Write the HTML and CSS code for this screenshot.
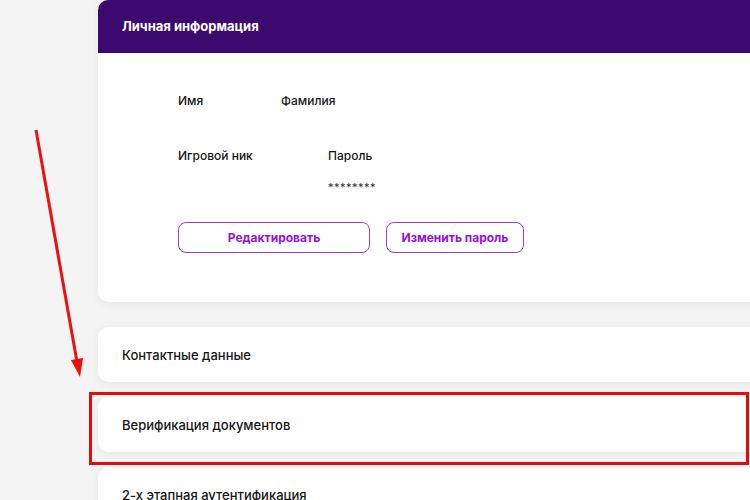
FILE: index.html
```html
<!DOCTYPE html>
<html lang="ru">
<head>
    <meta charset="UTF-8">
    <meta name="viewport" content="width=device-width, initial-scale=1.0">
    <title>Профиль</title>
    <link rel="stylesheet" href="styles.css">
</head>
<body>
    <div id="content">
        <div class="card info">
            <div class="info-head">Личная информация</div>
            <div class="info-body">
                <div class="fields">
                    <div class="field short">
                        <div class="label">Имя</div>
                        <div class="value"></div>
                    </div>
                    <div class="field">
                        <div class="label">Фамилия</div>
                        <div class="value"></div>
                    </div>
                </div>
                <div class="fields second">
                    <div class="field wide">
                        <div class="label">Игровой ник</div>
                        <div class="value"></div>
                    </div>
                    <div class="field">
                        <div class="label">Пароль</div>
                        <div class="value">********</div>
                    </div>
                </div>
                <div class="buttons">
                    <button class="btn edit">Редактировать</button>
                    <button class="btn pass">Изменить пароль</button>
                </div>
            </div>
        </div>

        <div class="card section">Контактные данные</div>
        <div class="card section">Верификация документов</div>
        <div class="card section">2-х этапная аутентификация</div>
    </div>

    <!-- annotation over the screenshot -->
    <div class="highlight"></div>
    <svg class="arrow" width="100" height="400" viewBox="0 0 100 400">
        <line x1="36" y1="130" x2="77" y2="362" stroke="#ee0f0f" stroke-width="3"/>
        <polygon points="80,377 71,360 83,358" fill="#ee0f0f"/>
    </svg>
</body>
</html>
```

FILE: styles.css
```css
body{
    margin: 0;
    background-color: #f4f4f4;
    font-family: Inter, "Noto Sans", sans-serif;
    color: #151515;
    overflow: hidden;
    height: 500px;
}

#content{
    margin-left: 98px;
    width: 700px;
    display: flex;
    flex-direction: column;
    gap: 15px;
}

.card{
    background-color: white;
    border-radius: 10px;
    box-shadow: 0 2px 10px rgba(0, 0, 0, 0.06);
}

.info{
    height: 302px;
    overflow: hidden;
    margin-bottom: 10px;
}

.info-head{
    height: 53px;
    background-color: #3c0a6e;
    color: white;
    font-size: 13px;
    font-weight: 700;
    padding-left: 24px;
    line-height: 53px;
}

.info-body{
    padding: 40px 80px 0;
}

.fields{
    display: flex;
}
.second{
    margin-top: 8px;
}

.field{
    display: flex;
    flex-direction: column;
    gap: 15px;
}
.short{
    width: 103px;
}
.wide{
    width: 150px;
}

.label{
    font-size: 12px;
    font-weight: 500;
    line-height: 16px;
}
.value{
    font-size: 11px;
    line-height: 16px;
    min-height: 16px;
    color: #333;
    letter-spacing: 0.5px;
}

.buttons{
    display: flex;
    gap: 16px;
    margin-top: 27px;
}

.btn{
    height: 31px;
    background-color: white;
    border: 1.5px solid #9a3fd0;
    border-radius: 8px;
    color: #9412dc;
    font-family: Inter, "Noto Sans", sans-serif;
    font-size: 12px;
    font-weight: 700;
    cursor: pointer;
}
.edit{
    width: 192px;
}
.pass{
    width: 138px;
}

.section{
    flex-shrink: 0;
    height: 55px;
    padding-left: 24px;
    display: flex;
    align-items: center;
    font-size: 13px;
    font-weight: 500;
}

.highlight{
    position: absolute;
    left: 89px;
    top: 392px;
    width: 654px;
    height: 67px;
    border: 3px solid #e40b0b;
}

.arrow{
    position: absolute;
    left: 0;
    top: 0;
}
```
